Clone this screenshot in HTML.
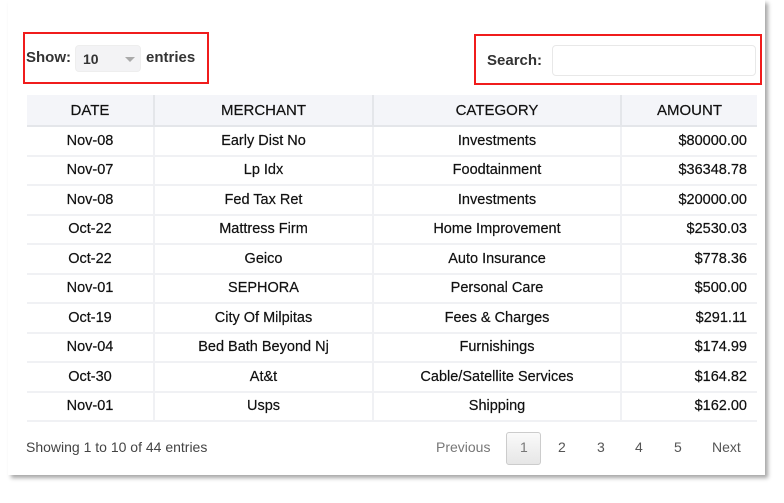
<!DOCTYPE html>
<html><head><style>
body{margin:0;width:784px;height:503px;background:#fff;font-family:"Liberation Sans",sans-serif;position:relative;overflow:hidden}
.card{position:absolute;left:8px;top:0;width:757px;height:475px;background:#fff;box-shadow:3px 3px 4px rgba(0,0,0,.35)}
.rb{position:absolute;border:2px solid #f01c1c;box-sizing:border-box}
.lbl{position:absolute;font-weight:bold;font-size:15px;color:#333}
table{position:absolute;left:27px;top:95px;width:730px;border-collapse:collapse;font-size:14.5px;color:#111;-webkit-text-stroke:0.2px #111}
th{height:30px;background:#f4f5f9;font-weight:normal;font-size:15px;border-right:2px solid #e4e6ea;border-bottom:2px solid #e4e6ea;padding:0}
td{height:27.5px;text-align:center;border-right:2px solid #f0f1f4;border-bottom:2px solid #f0f1f4;padding:0}
td:last-child{text-align:right;padding-right:10px}
th:last-child,td:last-child{border-right:none}
.pg{position:absolute;top:447px;font-size:14px;color:#555;transform:translateY(-50%)}
</style></head><body>
<div class="card"></div>
<div class="rb" style="left:23px;top:32px;width:186px;height:52px"></div>
<div class="rb" style="left:474px;top:34px;width:288px;height:51px"></div>
<div class="lbl" style="left:26px;top:49px">Show:</div>
<div style="position:absolute;left:75px;top:45px;width:66px;height:27px;background:#f3f3f5;border-radius:4px;border:1px solid #eee;box-sizing:border-box"><span style="position:absolute;left:7px;top:5px;font-size:14px;font-weight:bold;color:#333">10</span><span style="position:absolute;left:49px;top:11px;border-left:5px solid transparent;border-right:5px solid transparent;border-top:5px solid #aaa"></span></div>
<div class="lbl" style="left:146px;top:49px">entries</div>
<div class="lbl" style="left:487px;top:52px">Search:</div>
<div style="position:absolute;left:552px;top:45px;width:204px;height:31px;border:1px solid #e8e8e8;border-radius:4px;box-sizing:border-box"></div>
<table>
<tr><th style="width:126px">DATE</th><th style="width:217px">MERCHANT</th><th style="width:246px">CATEGORY</th><th>AMOUNT</th></tr>
<tr><td>Nov-08</td><td>Early Dist No</td><td>Investments</td><td>$80000.00</td></tr>
<tr><td>Nov-07</td><td>Lp Idx</td><td>Foodtainment</td><td>$36348.78</td></tr>
<tr><td>Nov-08</td><td>Fed Tax Ret</td><td>Investments</td><td>$20000.00</td></tr>
<tr><td>Oct-22</td><td>Mattress Firm</td><td>Home Improvement</td><td>$2530.03</td></tr>
<tr><td>Oct-22</td><td>Geico</td><td>Auto Insurance</td><td>$778.36</td></tr>
<tr><td>Nov-01</td><td>SEPHORA</td><td>Personal Care</td><td>$500.00</td></tr>
<tr><td>Oct-19</td><td>City Of Milpitas</td><td>Fees &amp; Charges</td><td>$291.11</td></tr>
<tr><td>Nov-04</td><td>Bed Bath Beyond Nj</td><td>Furnishings</td><td>$174.99</td></tr>
<tr><td>Oct-30</td><td>At&amp;t</td><td>Cable/Satellite Services</td><td>$164.82</td></tr>
<tr><td>Nov-01</td><td>Usps</td><td>Shipping</td><td>$162.00</td></tr>
</table>
<div class="pg" style="left:26px;color:#444">Showing 1 to 10 of 44 entries</div>
<div class="pg" style="left:436px;color:#777">Previous</div>
<div style="position:absolute;left:506px;top:432px;width:35px;height:33px;box-sizing:border-box;border:1px solid #ccc;border-radius:3px;background:linear-gradient(#fafafa,#e6e6e6)"></div>
<div class="pg" style="left:520px;color:#777">1</div>
<div class="pg" style="left:558px">2</div>
<div class="pg" style="left:597px">3</div>
<div class="pg" style="left:635px">4</div>
<div class="pg" style="left:674px">5</div>
<div class="pg" style="left:712px">Next</div>
</body></html>
